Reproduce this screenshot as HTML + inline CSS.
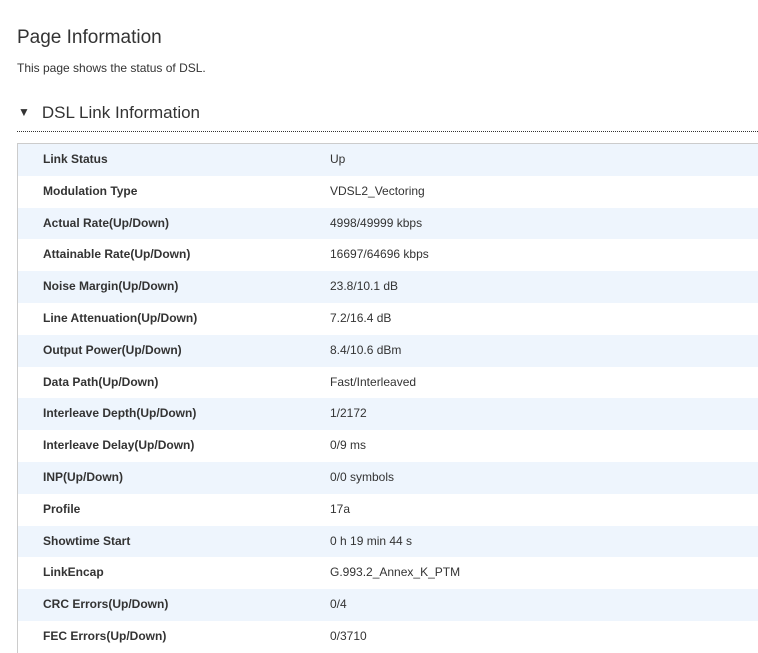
<!DOCTYPE html>
<html><head><style>
body{margin:0;background:#fff;font-family:"Liberation Sans",sans-serif;color:#333;width:758px;height:652px;overflow:hidden;position:relative}
h1{position:absolute;left:17px;top:27px;margin:0;font-size:19px;font-weight:normal;color:#333}
.sub{position:absolute;left:17px;top:61px;font-size:12px;color:#333}
.sec{position:absolute;left:18px;top:103px;font-size:17px;color:#333}
.sec span{font-size:12px;margin-right:12px;position:relative;top:-2px}
.dot{position:absolute;left:17px;right:0;top:131px;border-top:1px dotted #333}
.tbl{position:absolute;left:17px;right:0;top:143px;border-left:1px solid #ccc;border-top:1px solid #ccc}
.r{height:31.8px;position:relative;font-size:12px;line-height:31.8px}
.r:nth-child(odd){background:#eef5fd}
.r b{position:absolute;left:25px}
.r i{position:absolute;left:312px;font-style:normal}
</style></head><body>
<h1>Page Information</h1>
<div class="sub">This page shows the status of DSL.</div>
<div class="sec"><span>▼</span>DSL Link Information</div>
<div class="dot"></div>
<div class="tbl">
<div class="r"><b>Link Status</b><i>Up</i></div>
<div class="r"><b>Modulation Type</b><i>VDSL2_Vectoring</i></div>
<div class="r"><b>Actual Rate(Up/Down)</b><i>4998/49999 kbps</i></div>
<div class="r"><b>Attainable Rate(Up/Down)</b><i>16697/64696 kbps</i></div>
<div class="r"><b>Noise Margin(Up/Down)</b><i>23.8/10.1 dB</i></div>
<div class="r"><b>Line Attenuation(Up/Down)</b><i>7.2/16.4 dB</i></div>
<div class="r"><b>Output Power(Up/Down)</b><i>8.4/10.6 dBm</i></div>
<div class="r"><b>Data Path(Up/Down)</b><i>Fast/Interleaved</i></div>
<div class="r"><b>Interleave Depth(Up/Down)</b><i>1/2172</i></div>
<div class="r"><b>Interleave Delay(Up/Down)</b><i>0/9 ms</i></div>
<div class="r"><b>INP(Up/Down)</b><i>0/0 symbols</i></div>
<div class="r"><b>Profile</b><i>17a</i></div>
<div class="r"><b>Showtime Start</b><i>0 h 19 min 44 s</i></div>
<div class="r"><b>LinkEncap</b><i>G.993.2_Annex_K_PTM</i></div>
<div class="r"><b>CRC Errors(Up/Down)</b><i>0/4</i></div>
<div class="r"><b>FEC Errors(Up/Down)</b><i>0/3710</i></div>
</div>
</body></html>
